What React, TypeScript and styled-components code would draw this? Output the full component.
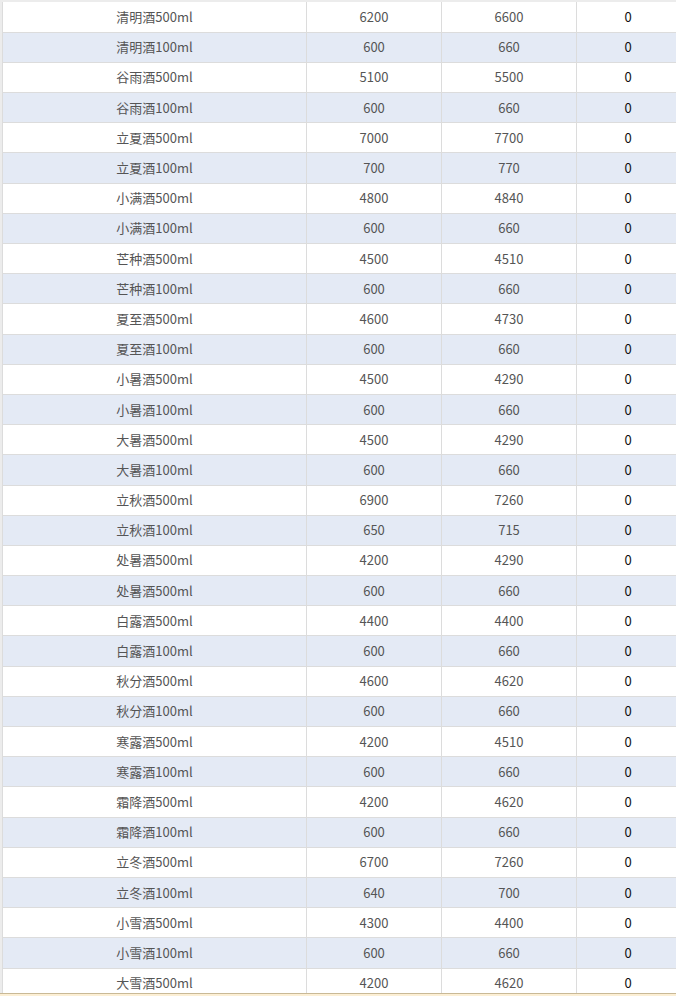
import React from "react";
import styled, { createGlobalStyle } from "styled-components";

const GlobalStyle = createGlobalStyle`
  html, body {
    margin: 0;
    padding: 0;
    background: #ececec;
    overflow: hidden;
  }
  body {
    font-family: "Noto Sans CJK SC", "Open Sans", sans-serif;
  }
`;

const Page = styled.div`
  padding: 2px 0 0 2px;
  height: 996px;
  box-sizing: border-box;
  background: #ececec;
`;

const Grid = styled.table`
  border-collapse: collapse;
  table-layout: fixed;
  width: 677px;
  background: #fff;
  border-left: 1px solid #dcdcdc;
`;

const Row = styled.tr<{ $alt: boolean }>`
  background: ${(p) => (p.$alt ? "#e4eaf5" : "#ffffff")};
  height: 30.2px;
`;

const Cell = styled.td<{ $dark?: boolean }>`
  padding: 0;
  border-right: 1px solid #dcdcdc;
  border-bottom: 1px solid #dcdcdc;
  text-align: center;
  vertical-align: middle;
  font-size: 13px;
  line-height: 18px;
  color: ${(p) => (p.$dark ? "#111" : "#555")};
  white-space: nowrap;
`;

const Footer = styled.div`
  position: fixed;
  left: 0;
  right: 0;
  bottom: 0;
  height: 2px;
  border-top: 1px solid #c9b996;
  background: #fcefd5;
`;

const rows: [string, number, number, number][] = [
  ["清明酒500ml", 6200, 6600, 0],
  ["清明酒100ml", 600, 660, 0],
  ["谷雨酒500ml", 5100, 5500, 0],
  ["谷雨酒100ml", 600, 660, 0],
  ["立夏酒500ml", 7000, 7700, 0],
  ["立夏酒100ml", 700, 770, 0],
  ["小满酒500ml", 4800, 4840, 0],
  ["小满酒100ml", 600, 660, 0],
  ["芒种酒500ml", 4500, 4510, 0],
  ["芒种酒100ml", 600, 660, 0],
  ["夏至酒500ml", 4600, 4730, 0],
  ["夏至酒100ml", 600, 660, 0],
  ["小暑酒500ml", 4500, 4290, 0],
  ["小暑酒100ml", 600, 660, 0],
  ["大暑酒500ml", 4500, 4290, 0],
  ["大暑酒100ml", 600, 660, 0],
  ["立秋酒500ml", 6900, 7260, 0],
  ["立秋酒100ml", 650, 715, 0],
  ["处暑酒500ml", 4200, 4290, 0],
  ["处暑酒500ml", 600, 660, 0],
  ["白露酒500ml", 4400, 4400, 0],
  ["白露酒100ml", 600, 660, 0],
  ["秋分酒500ml", 4600, 4620, 0],
  ["秋分酒100ml", 600, 660, 0],
  ["寒露酒500ml", 4200, 4510, 0],
  ["寒露酒100ml", 600, 660, 0],
  ["霜降酒500ml", 4200, 4620, 0],
  ["霜降酒100ml", 600, 660, 0],
  ["立冬酒500ml", 6700, 7260, 0],
  ["立冬酒100ml", 640, 700, 0],
  ["小雪酒500ml", 4300, 4400, 0],
  ["小雪酒100ml", 600, 660, 0],
  ["大雪酒500ml", 4200, 4620, 0],
];

export default function App() {
  return (
    <Page>
      <GlobalStyle />
      <Grid>
        <colgroup>
          <col style={{ width: 304 }} />
          <col style={{ width: 135 }} />
          <col style={{ width: 135 }} />
          <col style={{ width: 103 }} />
        </colgroup>
        <tbody>
          {rows.map((r, i) => (
            <Row key={i} $alt={i % 2 === 1}>
              <Cell>{r[0]}</Cell>
              <Cell>{r[1]}</Cell>
              <Cell>{r[2]}</Cell>
              <Cell $dark>{r[3]}</Cell>
            </Row>
          ))}
        </tbody>
      </Grid>
      <Footer />
    </Page>
  );
}
